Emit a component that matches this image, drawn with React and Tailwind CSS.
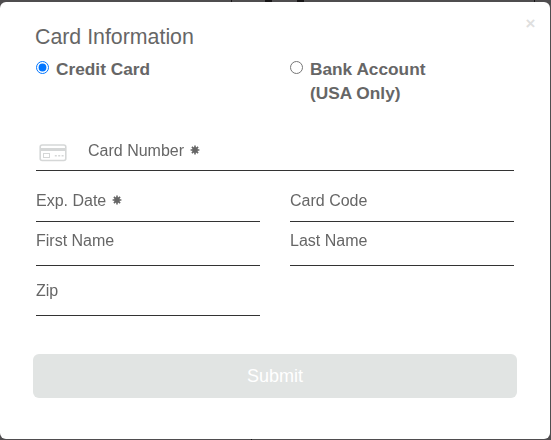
import React from "react";

function Required() {
  return (
    <svg className="ml-[6px] inline-block align-[1px]" width="10" height="10" viewBox="-5 -5 10 10" fill="#666666" aria-label="required">
      <path d="M-.8 -4.4h1.6L.8-2.4-.8-2.4ZM-.8 4.4h1.6L.8 2.4-.8 2.4ZM-4.4 -.8v1.6L-2.4 .8-2.4-.8ZM4.4 -.8v1.6L2.4 .8 2.4-.8Z" />
      <path d="M-.8 -4.4h1.6L.8-2.4-.8-2.4ZM-.8 4.4h1.6L.8 2.4-.8 2.4ZM-4.4 -.8v1.6L-2.4 .8-2.4-.8ZM4.4 -.8v1.6L2.4 .8 2.4-.8Z" transform="rotate(45)" />
      <circle r="2.9" />
    </svg>
  );
}

function Field({ label, required, className }) {
  return (
    <div className={"border-b border-[#333333] text-[16px] leading-[20px] " + className}>
      <span className="will-change-transform inline-block h-[20px] whitespace-nowrap">
        {label}
        {required && <Required />}
      </span>
    </div>
  );
}

function CardIcon() {
  return (
    <svg className="ml-[3px] mt-[3px] shrink-0" width="28" height="18" viewBox="0 0 28 18" fill="none">
      <rect x="1.2" y="1" width="25.6" height="15.5" rx="2" stroke="#d5d7d7" strokeWidth="1.6" />
      <rect x="1" y="4" width="26" height="3" fill="#d5d7d7" />
      <rect x="4.5" y="9.5" width="6" height="4" stroke="#d5d7d7" />
      <path d="M15.8 11.7h2M19.2 11.7h2M22.6 11.7h2" stroke="#d5d7d7" strokeWidth="1.6" />
    </svg>
  );
}

export default function App() {
  return (
    <div className="relative h-[440px] w-[551px] overflow-hidden bg-[#4f4d4f] pt-[2px] pr-px pb-px font-['Liberation_Sans',sans-serif] text-[#666666]">
      <div className="absolute left-[231px] top-0 h-[2px] w-px bg-[#171517]" />
      <div className="absolute left-[265px] top-0 h-[2px] w-[7px] bg-[#171517]" />
      <div className="absolute left-[297px] top-0 h-[2px] w-[7px] bg-[#171517]" />
      <div className="absolute left-[534px] top-0 h-[2px] w-px bg-[#171517]" />
      <div className="absolute left-[251px] bottom-0 h-px w-px bg-[#171517]" />
      <div className="relative h-[437px] w-[550px] rounded-[6px] bg-white pl-[35px]">
        <button className="absolute left-[525px] top-[12px] h-[20px] w-[11px] text-center text-[17px] font-bold leading-[20px] text-[#dfdfdf]">×</button>
        <h1 className="h-[54px] pt-[22px] text-[21.33px] leading-[26px]">Card Information</h1>
        <div className="flex h-[82px] pt-px text-[17.28px] font-bold leading-[24px]">
          <label className="flex w-[254px] items-start">
            <input type="radio" name="method" defaultChecked className="ml-px mt-[4px] mr-[7px] h-[13px] w-[13px]" />
            Credit Card
          </label>
          <label className="flex items-start">
            <input type="radio" name="method" className="ml-px mt-[4px] mr-[7px] h-[13px] w-[13px]" />
            <span>Bank Account<br />(USA Only)</span>
          </label>
        </div>
        <div className="ml-px w-[478px]">
          <div className="flex h-[33px] border-b border-[#333333] pt-[3px] text-[16px] leading-[20px]">
            <CardIcon />
            <span className="ml-[21px] h-[20px] whitespace-nowrap will-change-transform">Card Number<Required /></span>
          </div>
          <div className="grid grid-cols-2 gap-x-[30px]">
            <Field label="Exp. Date" required className="h-[51px] pt-[20px]" />
            <Field label="Card Code" className="h-[51px] pt-[20px]" />
            <Field label="First Name" className="h-[44px] pt-[9px]" />
            <Field label="Last Name" className="h-[44px] pt-[9px]" />
            <Field label="Zip" className="h-[50px] pt-[15px]" />
          </div>
        </div>
        <button className="-ml-[2px] mt-[38px] block h-[44px] w-[484px] rounded-[6px] bg-[#e1e4e3] text-[18px] text-white">Submit</button>
      </div>
    </div>
  );
}
